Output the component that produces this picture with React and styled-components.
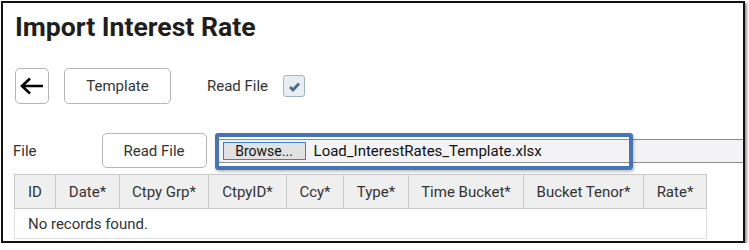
import React from 'react';
import styled, { createGlobalStyle } from 'styled-components';

const GlobalStyle = createGlobalStyle`
  body {
    margin: 0;
    background: #fff;
    font-family: Roboto, "Liberation Sans", sans-serif;
    color: #333;
  }
`;

const Frame = styled.div`
  position: relative;
  box-sizing: border-box;
  margin: 1px 0 0 1px;
  width: 744px;
  height: 242px;
  border: 2px solid #111;
  box-shadow: 2px 2px 2px #9a9a9a;
  overflow: hidden;
  background: #fff;
`;

const Title = styled.h1`
  margin: 9px 0 0 12px;
  font-size: 26.6px;
  line-height: 30px;
  font-weight: 700;
  color: #1e1e1e;
`;

const Toolbar = styled.div`
  display: flex;
  align-items: center;
  height: 36px;
  margin: 26px 0 0 12px;
`;

const Button = styled.button`
  box-sizing: border-box;
  flex-shrink: 0;
  display: flex;
  align-items: center;
  justify-content: center;
  height: ${p => p.$h || 36}px;
  width: ${p => p.$w}px;
  padding: 0;
  background: #fff;
  border: 1px solid #b5b5b5;
  border-radius: 5px;
  font-family: inherit;
  font-size: 15px;
  color: #333;
  cursor: pointer;
`;

const TemplateButton = styled(Button)`
  margin-left: 15px;
`;

const Label = styled.span`
  flex-shrink: 0;
  font-size: 15px;
  color: #333;
  margin-left: ${p => p.$ml || 0}px;
`;

const Check = styled.span`
  box-sizing: border-box;
  display: flex;
  align-items: center;
  justify-content: center;
  width: 22px;
  height: 22px;
  margin-left: 15px;
  border: 1px solid #9fb3c6;
  border-radius: 3px;
  background: #e8edf2;
`;

const FileRow = styled.div`
  display: flex;
  align-items: center;
  height: 37px;
  margin-top: 28px;
  padding-left: 10px;
`;

const ReadButton = styled(Button)`
  margin-left: 65px;
`;

const FileField = styled.div`
  position: relative;
  flex: 1;
  min-width: 0;
  margin-left: 12px;
  height: 24px;
`;

const FileBar = styled.div`
  box-sizing: border-box;
  display: flex;
  align-items: center;
  height: 24px;
  width: 560px;
  padding-left: 4px;
  background: #f3f3f5;
  border-top: 1px solid #8c8c8c;
  border-bottom: 1px solid #8c8c8c;
`;

const Browse = styled.span`
  box-sizing: border-box;
  display: flex;
  align-items: center;
  justify-content: center;
  flex-shrink: 0;
  width: 83px;
  height: 18px;
  background: #e1e1e1;
  border: 1px solid #3d83c0;
  font-size: 14px;
  color: #111;
`;

const FileName = styled.span`
  margin-left: 8px;
  font-size: 15px;
  color: #111;
  white-space: nowrap;
`;

const Highlight = styled.div`
  position: absolute;
  left: -4px;
  top: -6px;
  box-sizing: border-box;
  width: 418px;
  height: 37px;
  border: 4px solid #4675b5;
  border-radius: 3px;
  box-shadow: 1px 2px 3px rgba(0, 0, 0, 0.25);
  pointer-events: none;
`;

const Table = styled.table`
  margin: 5px 0 0 11px;
  border-collapse: collapse;
  font-size: 15px;
  color: #333;
`;

const Th = styled.th`
  box-sizing: border-box;
  height: 34px;
  padding: 0;
  width: ${p => p.$w}px;
  background: #efefef;
  border: 1px solid #c9c9c9;
  font-weight: 400;
  text-align: center;
`;

const Td = styled.td`
  box-sizing: border-box;
  height: 30px;
  padding: 0 0 0 13px;
  border: 1px solid #dedede;
  text-align: left;
`;

const columns = [
  ['ID', 41],
  ['Date*', 64],
  ['Ctpy Grp*', 89],
  ['CtpyID*', 78],
  ['Ccy*', 57],
  ['Type*', 65],
  ['Time Bucket*', 115],
  ['Bucket Tenor*', 120],
  ['Rate*', 63],
];

const ArrowLeft = () => (
  <svg width="26" height="20" viewBox="0 0 26 20">
    <path d="M3 10 H24 M11 2.5 L3 10 L11 17.5" fill="none" stroke="#000" strokeWidth="2.6" />
  </svg>
);

const CheckMark = () => (
  <svg width="13" height="11" viewBox="0 0 13 11">
    <path d="M2 6 L5 9 L11 2.5" fill="none" stroke="#4b6b87" strokeWidth="2.8" />
  </svg>
);

export default function App() {
  return (
    <>
      <GlobalStyle />
      <Frame>
        <Title>Import Interest Rate</Title>
        <Toolbar>
          <Button $w={34}><ArrowLeft /></Button>
          <TemplateButton $w={107}>Template</TemplateButton>
          <Label $ml={36}>Read File</Label>
          <Check><CheckMark /></Check>
        </Toolbar>
        <FileRow>
          <Label>File</Label>
          <ReadButton $w={105} $h={35}>Read File</ReadButton>
          <FileField>
            <FileBar>
              <Browse>Browse...</Browse>
              <FileName>Load_InterestRates_Template.xlsx</FileName>
            </FileBar>
            <Highlight />
          </FileField>
        </FileRow>
        <Table>
          <thead>
            <tr>
              {columns.map(([name, w]) => (
                <Th key={name} $w={w}>{name}</Th>
              ))}
            </tr>
          </thead>
          <tbody>
            <tr>
              <Td colSpan={columns.length}>No records found.</Td>
            </tr>
          </tbody>
        </Table>
      </Frame>
    </>
  );
}
